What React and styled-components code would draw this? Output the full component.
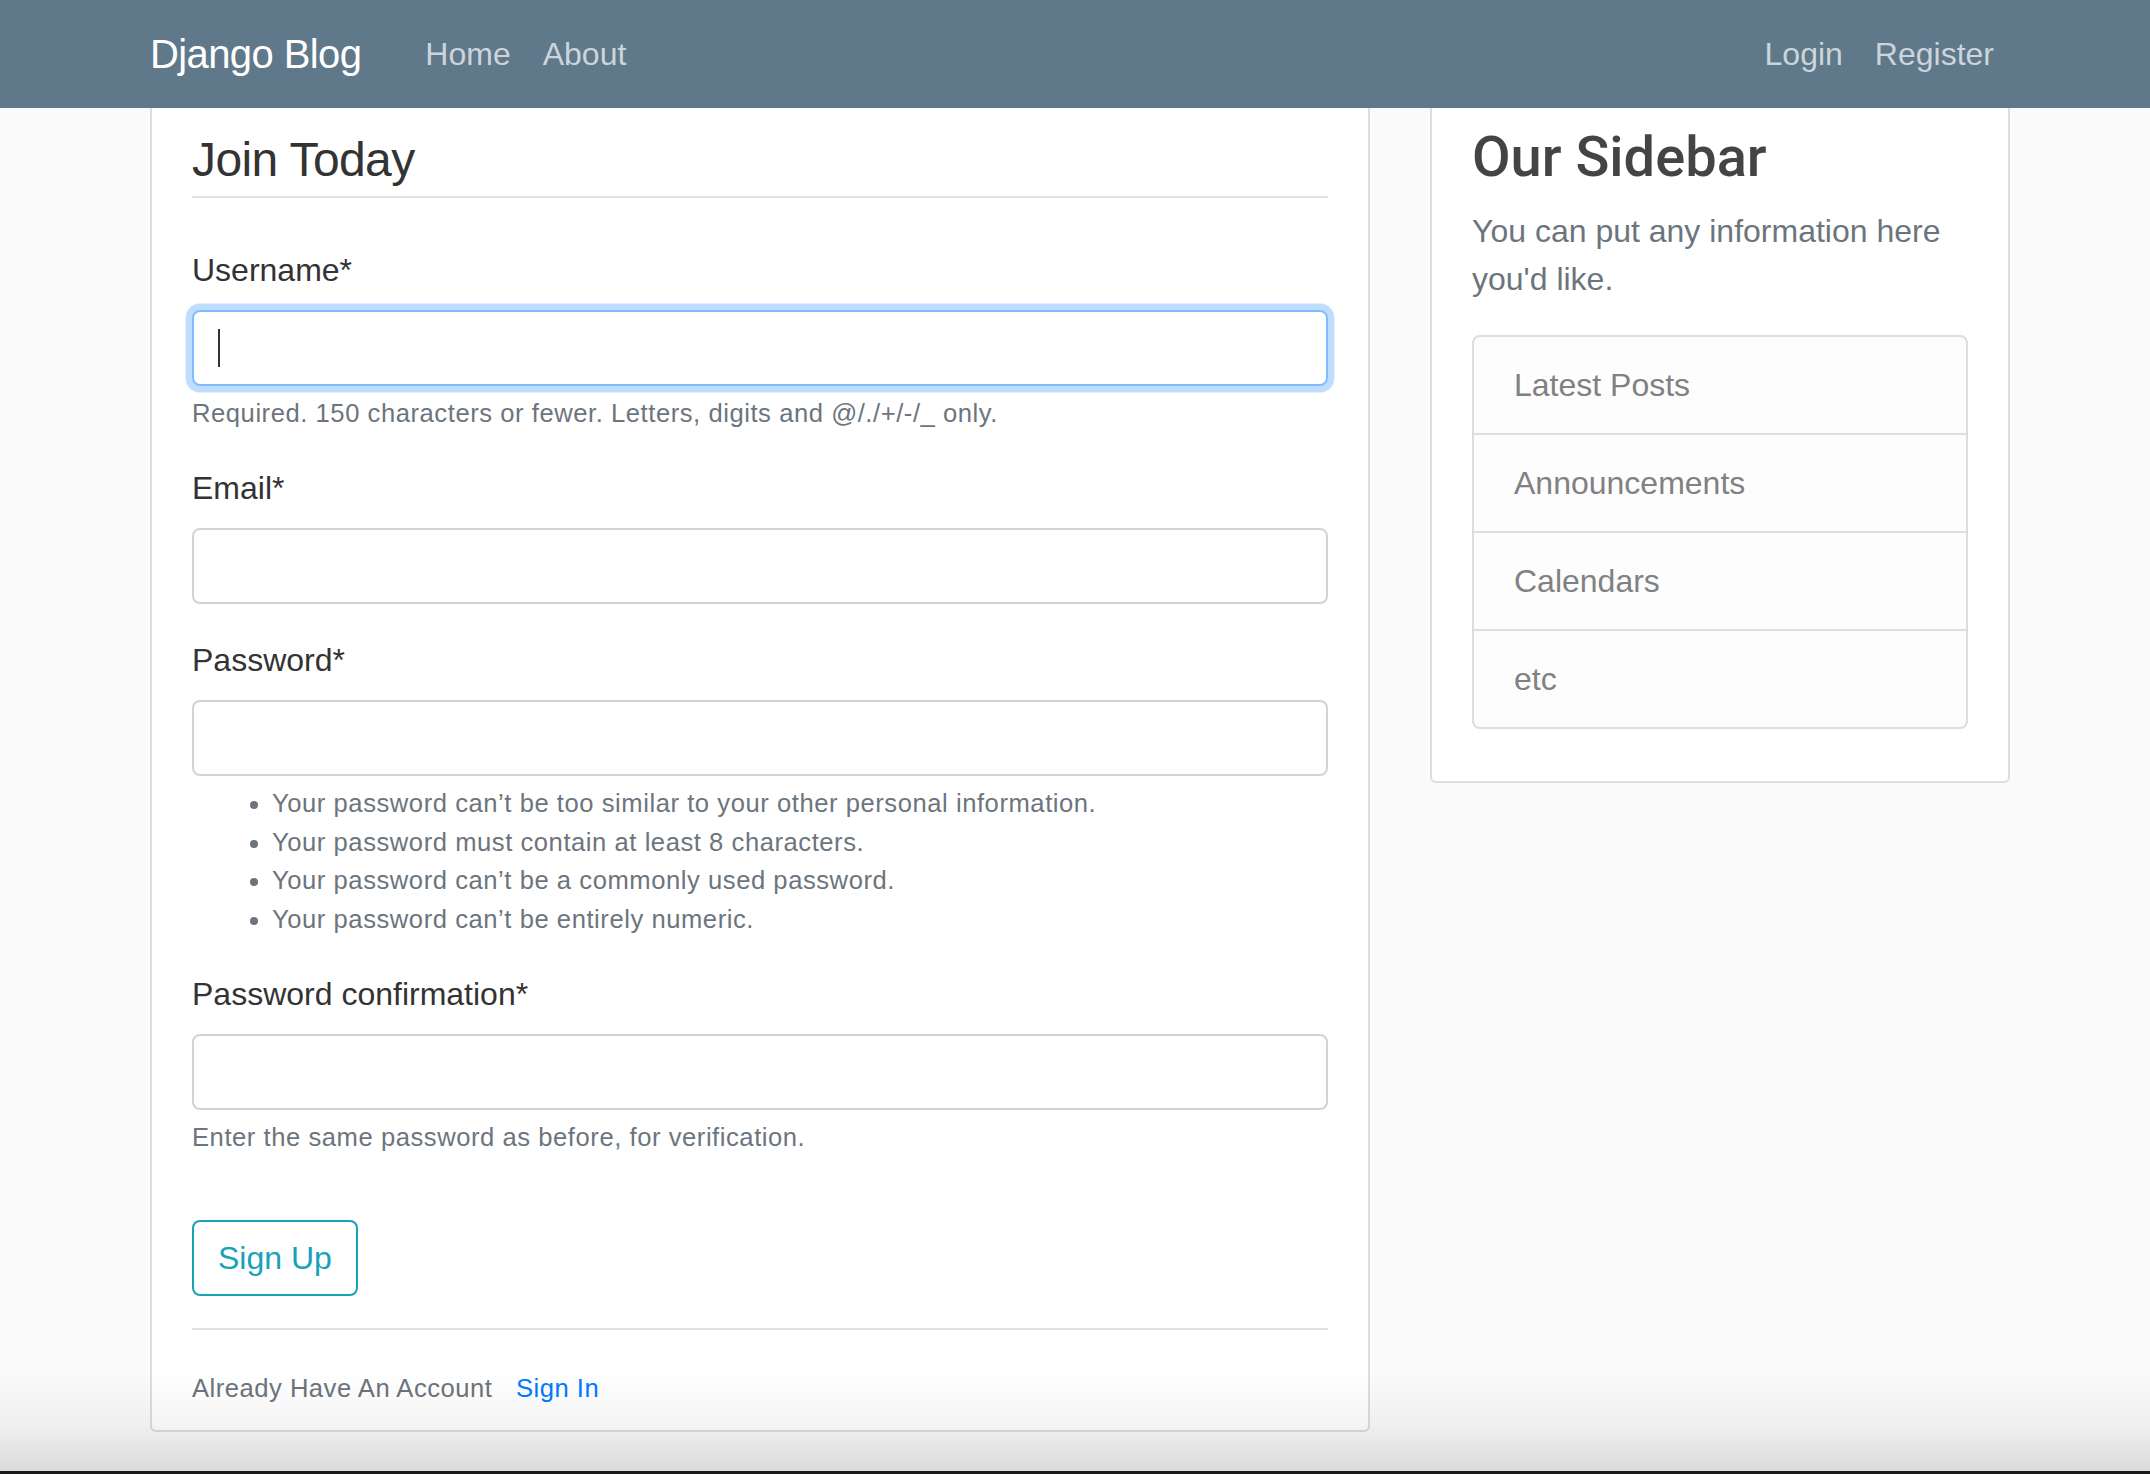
import React from "react";
import styled, { createGlobalStyle } from "styled-components";

const GlobalStyle = createGlobalStyle`
  html, body {
    margin: 0;
    padding: 0;
    background: #fafafa;
    color: #333333;
    font-family: "Liberation Sans", Arial, sans-serif;
    font-size: 32px;
    line-height: 1.5;
  }
  *, *::before, *::after { box-sizing: border-box; }
`;

const Page = styled.div`
  min-height: 1474px;
  padding-top: 102px;
  background: #fafafa;
`;

const Navbar = styled.nav`
  position: fixed;
  top: 0;
  left: 0;
  right: 0;
  height: 108px;
  background: #5f788a;
  z-index: 10;
  display: flex;
  align-items: center;
`;

const Container = styled.div`
  width: 1920px;
  margin-left: 120px;
  padding: 0 30px;
`;

const NavInner = styled(Container)`
  display: flex;
  align-items: center;
`;

const Brand = styled.a`
  color: #ffffff;
  font-size: 40px;
  line-height: 60px;
  letter-spacing: -0.6px;
  margin-right: 48px;
  text-decoration: none;
`;

const NavLinks = styled.div`
  display: flex;
  align-items: center;
  margin-left: ${(p) => (p.$right ? "auto" : "0")};
`;

const NavLink = styled.a`
  color: #cbd5db;
  font-size: 32px;
  line-height: 48px;
  padding: 0 16px;
  text-decoration: none;
`;

const Row = styled(Container)`
  display: grid;
  grid-template-columns: 1220px 580px;
  column-gap: 60px;
  align-items: start;
`;

const Section = styled.div`
  background: #ffffff;
  border: 2px solid #dddddd;
  border-radius: 6px;
  padding: 20px 40px;
`;

const Fieldset = styled.fieldset`
  border: 0;
  padding: 0;
  margin: 0 0 32px;
  min-width: 0;
  display: flow-root;
`;

const Legend = styled.div`
  font-size: 48px;
  line-height: 72px;
  letter-spacing: -0.6px;
  border-bottom: 2px solid #dee2e6;
  margin-bottom: 48px;
  color: #333333;
`;

const FormGroup = styled.div`
  margin-bottom: 32px;
`;

const Label = styled.label`
  display: inline-block;
  font-size: 32px;
  line-height: 48px;
  margin-bottom: 16px;
  color: #333333;
`;

const InputWrap = styled.div`
  position: relative;
  ${(p) =>
    p.$caret &&
    `
    &::after {
      content: "";
      position: absolute;
      left: 26px;
      top: 19px;
      width: 2px;
      height: 38px;
      background: #333;
    }
  `}
`;

const Input = styled.input`
  display: block;
  width: 100%;
  height: 76px;
  padding: 12px 24px;
  font-family: inherit;
  font-size: 32px;
  color: #495057;
  background: #ffffff;
  border: 2px solid ${(p) => (p.$focused ? "#80bdff" : "#ced4da")};
  border-radius: 8px;
  outline: none;
  box-shadow: ${(p) => (p.$focused ? "0 0 0 6.4px rgba(0,123,255,.25)" : "none")};
  caret-color: transparent;
`;

const HelpText = styled.small`
  display: block;
  margin-top: 8px;
  font-size: 25.6px;
  line-height: 38.4px;
  letter-spacing: 0.55px;
  color: #6c757d;
`;

const HelpList = styled.ul`
  margin: 8px 0 0;
  padding-left: 80px;
  font-size: 25.6px;
  line-height: 38.4px;
  letter-spacing: 0.55px;
  color: #6c757d;
`;

const ButtonGroup = styled.div`
  margin-bottom: 32px;
`;

const OutlineButton = styled.button`
  display: inline-block;
  font-family: inherit;
  font-size: 32px;
  line-height: 48px;
  padding: 12px 24px;
  color: #17a2b8;
  background: transparent;
  border: 2px solid #17a2b8;
  border-radius: 8px;
  cursor: pointer;
`;

const Footer = styled.div`
  border-top: 2px solid #dee2e6;
  padding-top: 32px;
`;

const Muted = styled.small`
  font-size: 25.6px;
  letter-spacing: 0.5px;
  color: #6c757d;
`;

const SignInLink = styled.a`
  margin-left: 16px;
  color: #007bff;
  text-decoration: none;
`;

const SideTitle = styled.h3`
  font-family: Roboto, "Liberation Sans", sans-serif;
  font-size: 56px;
  font-weight: 500;
  line-height: 1.2;
  margin: 0 0 16px;
  color: #444444;
`;

const SideText = styled.p`
  margin: 0 0 32px;
  color: #6c757d;
  font-size: 32px;
  line-height: 48px;
`;

const ListGroup = styled.ul`
  list-style: none;
  margin: 0 0 32px;
  padding: 0;
  display: flex;
  flex-direction: column;
`;

const ListItem = styled.li`
  padding: 24px 40px;
  font-size: 32px;
  line-height: 48px;
  color: #818182;
  background: #fdfdfe;
  border: 2px solid rgba(0, 0, 0, 0.125);
  & + & { border-top-width: 0; }
  &:first-child { border-radius: 8px 8px 0 0; }
  &:last-child { border-radius: 0 0 8px 8px; }
`;

const WindowShade = styled.div`
  position: fixed;
  left: 0;
  right: 0;
  bottom: 0;
  height: 100px;
  pointer-events: none;
  z-index: 20;
  background: linear-gradient(to bottom, rgba(0,0,0,0) 0%, rgba(0,0,0,0.04) 50%, rgba(0,0,0,0.13) 100%);
  &::after {
    content: "";
    position: absolute;
    left: 0;
    right: 0;
    bottom: 0;
    height: 3px;
    background: #1a1a1a;
  }
`;

const passwordRules = [
  "Your password can’t be too similar to your other personal information.",
  "Your password must contain at least 8 characters.",
  "Your password can’t be a commonly used password.",
  "Your password can’t be entirely numeric.",
];

const sidebarItems = ["Latest Posts", "Announcements", "Calendars", "etc"];

export default function App() {
  return (
    <>
      <GlobalStyle />
      <Navbar>
        <NavInner>
          <Brand href="#">Django Blog</Brand>
          <NavLinks>
            <NavLink href="#">Home</NavLink>
            <NavLink href="#">About</NavLink>
          </NavLinks>
          <NavLinks $right>
            <NavLink href="#">Login</NavLink>
            <NavLink href="#">Register</NavLink>
          </NavLinks>
        </NavInner>
      </Navbar>
      <Page>
        <Row>
          <Section>
            <form onSubmit={(e) => e.preventDefault()}>
              <Fieldset>
                <Legend>Join Today</Legend>
                <FormGroup>
                  <Label>Username*</Label>
                  <InputWrap $caret>
                    <Input type="text" $focused />
                  </InputWrap>
                  <HelpText>Required. 150 characters or fewer. Letters, digits and @/./+/-/_ only.</HelpText>
                </FormGroup>
                <FormGroup>
                  <Label>Email*</Label>
                  <Input type="email" />
                </FormGroup>
                <FormGroup>
                  <Label>Password*</Label>
                  <Input type="password" />
                  <HelpList>
                    {passwordRules.map((r) => (
                      <li key={r}>{r}</li>
                    ))}
                  </HelpList>
                </FormGroup>
                <FormGroup>
                  <Label>Password confirmation*</Label>
                  <Input type="password" />
                  <HelpText>Enter the same password as before, for verification.</HelpText>
                </FormGroup>
              </Fieldset>
              <ButtonGroup>
                <OutlineButton type="submit">Sign Up</OutlineButton>
              </ButtonGroup>
            </form>
            <Footer>
              <Muted>
                Already Have An Account{" "}
                <SignInLink href="#">Sign In</SignInLink>
              </Muted>
            </Footer>
          </Section>
          <Section>
            <SideTitle>Our Sidebar</SideTitle>
            <SideText>You can put any information here you'd like.</SideText>
            <ListGroup>
              {sidebarItems.map((item) => (
                <ListItem key={item}>{item}</ListItem>
              ))}
            </ListGroup>
          </Section>
        </Row>
      </Page>
      <WindowShade />
    </>
  );
}
